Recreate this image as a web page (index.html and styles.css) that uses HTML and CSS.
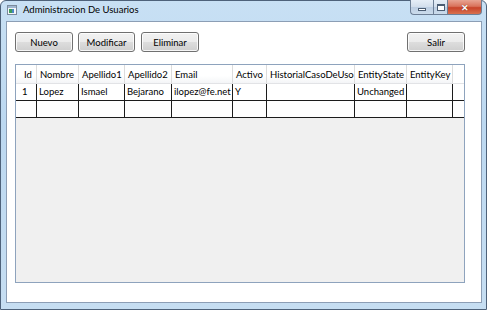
FILE: index.html
```
<!DOCTYPE html>
<html>
<head>
    <meta charset="UTF-8" />
    <title>Administracion De Usuarios</title>
    <link rel="stylesheet" href="styles.css">
</head>

<body>
    <div class="window">
        <div class="title-bar">
            <svg class="app-icon" width="10" height="10" viewBox="0 0 10 10">
                <rect x="0.5" y="0.5" width="9" height="9" fill="#f4f6f8" stroke="#7a8a9c" />
                <rect x="1" y="1" width="8" height="2" fill="#9fb6d0" />
                <rect x="2" y="4" width="3" height="4" fill="#3f9b5a" />
                <rect x="5" y="4" width="2" height="4" fill="#4a86c8" />
            </svg>
            <span class="title-text">Administracion De Usuarios</span>
            <div class="caption-buttons">
                <div class="cap-btn cap-min"><span class="min-glyph"></span></div>
                <div class="cap-btn cap-max"><span class="max-glyph"></span></div>
                <div class="cap-btn cap-close">&#x2715;</div>
            </div>
        </div>

        <div class="client">
            <div class="toolbar">
                <button class="btn btn-nuevo">Nuevo</button>
                <button class="btn btn-modificar">Modificar</button>
                <button class="btn btn-eliminar">Eliminar</button>
                <button class="btn btn-salir">Salir</button>
            </div>

            <div class="data-grid">
                <div class="grid-row grid-header">
                    <div class="cell id-cell">Id</div>
                    <div class="cell">Nombre</div>
                    <div class="cell">Apellido1</div>
                    <div class="cell">Apellido2</div>
                    <div class="cell">Email</div>
                    <div class="cell">Activo</div>
                    <div class="cell">HistorialCasoDeUso</div>
                    <div class="cell">EntityState</div>
                    <div class="cell">EntityKey</div>
                    <div class="cell filler"></div>
                </div>
                <div class="grid-row grid-data">
                    <div class="cell id-cell">1</div>
                    <div class="cell">Lopez</div>
                    <div class="cell">Ismael</div>
                    <div class="cell">Bejarano</div>
                    <div class="cell">ilopez@fe.net</div>
                    <div class="cell">Y</div>
                    <div class="cell"></div>
                    <div class="cell">Unchanged</div>
                    <div class="cell"></div>
                    <div class="cell filler"></div>
                </div>
                <div class="grid-row grid-data">
                    <div class="cell id-cell"></div>
                    <div class="cell"></div>
                    <div class="cell"></div>
                    <div class="cell"></div>
                    <div class="cell"></div>
                    <div class="cell"></div>
                    <div class="cell"></div>
                    <div class="cell"></div>
                    <div class="cell"></div>
                    <div class="cell filler"></div>
                </div>
            </div>
        </div>
    </div>
</body>
</html>
```

FILE: styles.css
```
* {
    margin: 0;
    padding: 0;
    box-sizing: border-box;
}

body {
    font-family: Lato, "Open Sans", sans-serif;
    background: #fff;
    width: 487px;
    height: 310px;
    overflow: hidden;
}

.window {
    width: 487px;
    height: 310px;
    border: 1px solid #4e627a;
    border-radius: 6px 6px 0 0;
    background: linear-gradient(to bottom, #c8e0f4 0%, #bcd8f0 40%, #c6def2 100%);
    padding: 0 4px 6px 5px;
    display: flex;
    flex-direction: column;
}

.title-bar {
    height: 20px;
    display: flex;
    align-items: flex-start;
}

.app-icon {
    margin: 4px 0 0 1px;
}

.title-text {
    margin: 3px 0 0 6px;
    font-size: 9.5px;
    color: #000;
}

.caption-buttons {
    margin-left: auto;
    margin-top: -1px;
    display: flex;
}

.cap-btn {
    height: 15px;
    border: 1px solid #6d7f96;
    border-top: none;
    display: flex;
    align-items: center;
    justify-content: center;
    background: linear-gradient(to bottom, #e6eef7 0%, #d2deec 50%, #bccde2 51%, #cbdcec 100%);
}

.cap-min {
    width: 23px;
    border-radius: 0 0 0 4px;
    border-right: none;
}

.cap-max {
    width: 15px;
}

.cap-close {
    width: 34px;
    border-left: none;
    border-radius: 0 0 4px 0;
    background: linear-gradient(to bottom, #e8a493 0%, #d9735c 45%, #c8432a 55%, #d8714f 100%);
    color: #fff;
    font-size: 9px;
    font-weight: bold;
    text-shadow: 0 0 1px #5a1a10;
}

.min-glyph {
    width: 8px;
    height: 3px;
    margin-top: 4px;
    border: 1px solid #4b5d73;
    background: #fff;
}

.max-glyph {
    width: 8px;
    height: 7px;
    border: 1px solid #4b5d73;
    border-top-width: 2px;
    background: #fff;
}

.client {
    flex: 1;
    background: #fff;
    border: 1px solid #8c9eb5;
    padding: 10px 16px 19px 8px;
    display: flex;
    flex-direction: column;
}

.toolbar {
    display: flex;
    height: 20px;
}

.btn {
    height: 20px;
    border: 1px solid #707070;
    border-radius: 3px;
    background: linear-gradient(to bottom, #f2f2f2 0%, #ebebeb 50%, #dddddd 51%, #cfcfcf 100%);
    box-shadow: inset 0 0 0 1px rgba(255, 255, 255, 0.8);
    font-family: Lato, "Open Sans", sans-serif;
    font-size: 9.5px;
    color: #000;
}

.btn-nuevo {
    width: 58px;
}

.btn-modificar {
    width: 57px;
    margin-left: 5px;
}

.btn-eliminar {
    width: 58px;
    margin-left: 6px;
}

.btn-salir {
    width: 58px;
    margin-left: auto;
}

.data-grid {
    flex: 1;
    margin-top: 12px;
    border: 1px solid #8ea3bd;
    background: #f0f0f0;
}

.grid-row {
    display: grid;
    grid-template-columns: 21px 42px 46px 47px 61px 34px 88px 52px 46px 1fr;
    font-size: 9.5px;
}

.grid-header {
    height: 19px;
    background: linear-gradient(to bottom, #ffffff 0%, #ffffff 60%, #f4f5f7 100%);
    border-bottom: 1px solid #e2e3e6;
}

.grid-header .cell {
    border-right: 1px solid #dcdcdc;
    padding: 4px 0 0 3px;
    white-space: nowrap;
    overflow: hidden;
}

.grid-data {
    height: 17px;
    background: #fff;
    border-bottom: 1px solid #1c1c1c;
}

.grid-data .cell {
    border-right: 1px solid #1c1c1c;
    padding: 2px 0 0 2px;
    white-space: nowrap;
    overflow: hidden;
}

.grid-header .id-cell {
    padding-left: 8px;
}

.grid-data .id-cell {
    padding-left: 6px;
}

.grid-row .filler {
    border-right: none;
}

.grid-header .filler {
    background: #fff;
}
```
